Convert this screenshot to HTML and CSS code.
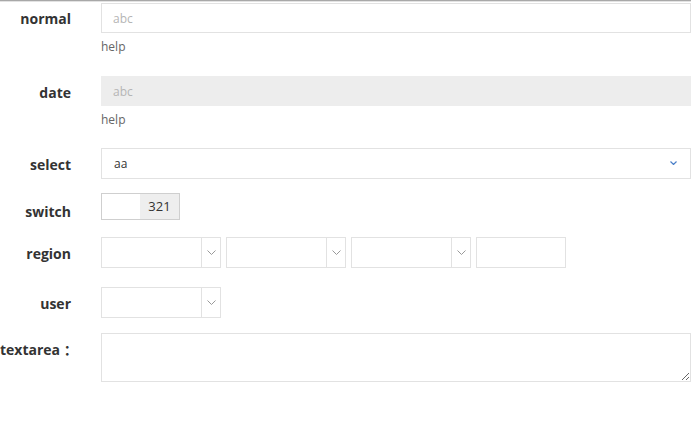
FILE: index.html
```html
<!DOCTYPE html>
<html>
<head>
<meta charset="utf-8">
<link rel="stylesheet" href="styles.css">
</head>
<body>
<div class="topline"></div>
<form class="form">
  <div class="row r1">
    <div class="label">normal</div>
    <div class="control">
      <input class="input" type="text" placeholder="abc">
      <div class="help">help</div>
    </div>
  </div>
  <div class="row r2">
    <div class="label">date</div>
    <div class="control">
      <input class="input disabled" type="text" placeholder="abc" disabled>
      <div class="help">help</div>
    </div>
  </div>
  <div class="row r3">
    <div class="label">select</div>
    <div class="control">
      <div class="select">
        <span class="select-text">aa</span>
        <svg class="select-arrow" width="7" height="4" viewBox="0 0 7 4"><polyline points="0.5,0.5 3.5,3.5 6.5,0.5" fill="none" stroke="#4a7fc8" stroke-width="1.2"/></svg>
      </div>
    </div>
  </div>
  <div class="row r4">
    <div class="label">switch</div>
    <div class="control">
      <div class="switch"><span class="switch-off"></span><span class="switch-val">321</span></div>
    </div>
  </div>
  <div class="row r5">
    <div class="label">region</div>
    <div class="control inline">
      <div class="dd"><span class="dd-body"></span><span class="dd-btn"><svg width="9" height="5" viewBox="0 0 9 5"><polyline points="0.5,0.5 4.5,4.5 8.5,0.5" fill="none" stroke="#999" stroke-width="1"/></svg></span></div>
      <div class="dd"><span class="dd-body"></span><span class="dd-btn"><svg width="9" height="5" viewBox="0 0 9 5"><polyline points="0.5,0.5 4.5,4.5 8.5,0.5" fill="none" stroke="#999" stroke-width="1"/></svg></span></div>
      <div class="dd"><span class="dd-body"></span><span class="dd-btn"><svg width="9" height="5" viewBox="0 0 9 5"><polyline points="0.5,0.5 4.5,4.5 8.5,0.5" fill="none" stroke="#999" stroke-width="1"/></svg></span></div>
      <input class="small-input" type="text">
    </div>
  </div>
  <div class="row r6">
    <div class="label">user</div>
    <div class="control inline">
      <div class="dd"><span class="dd-body"></span><span class="dd-btn"><svg width="9" height="5" viewBox="0 0 9 5"><polyline points="0.5,0.5 4.5,4.5 8.5,0.5" fill="none" stroke="#999" stroke-width="1"/></svg></span></div>
    </div>
  </div>
  <div class="row r7">
    <div class="label label-start">textarea ：</div>
    <div class="control">
      <textarea class="textarea"></textarea>
    </div>
  </div>
</form>
</body>
</html>
```

FILE: styles.css
```css
html, body {
  margin: 0;
  padding: 0;
  background: #fff;
}
body {
  font-family: "Open Sans", "Noto Sans CJK SC", sans-serif;
  color: #333;
  overflow: hidden;
}
.topline {
  height: 1px;
  background: #a8a8a8;
  border-bottom: 1px solid #e2e2e2;
}
.form {
  padding-top: 1px;
}
.row {
  display: flex;
  align-items: flex-start;
  min-height: 34px;
}
.r1 { margin-bottom: 20px; }
.r2 { margin-bottom: 19px; }
.r3 { margin-bottom: 11px; }
.r4 { margin-bottom: 10px; }
.r5 { margin-bottom: 16px; }
.r6 { margin-bottom: 12px; }
.label {
  flex: 0 0 71px;
  width: 71px;
  margin-right: 30px;
  display: flex;
  justify-content: flex-end;
  white-space: nowrap;
  font-size: 14px;
  font-weight: 700;
  line-height: 20px;
  padding-top: 7px;
  color: #333;
}
.label.label-start {
  justify-content: flex-start;
}
.r1 .label { padding-top: 6px; }
.r4 .label { padding-top: 9px; }
.control {
  flex: 1;
  min-width: 0;
}
.control.inline {
  display: flex;
  gap: 5px;
}
.input {
  display: block;
  box-sizing: border-box;
  width: 590px;
  height: 30px;
  margin: 0;
  border: 1px solid #e2e2e2;
  padding: 0 11px;
  font-family: "Open Sans", sans-serif;
  font-size: 12px;
  color: #333;
  background: #fff;
  outline: none;
}
.input::placeholder {
  color: #b5b5b5;
}
.input.disabled {
  background: #ededed;
  border-color: #ededed;
}
.help {
  margin-top: 5px;
  font-size: 12px;
  line-height: 18px;
  color: #666;
}
.select {
  box-sizing: border-box;
  width: 590px;
  height: 31px;
  border: 1px solid #e2e2e2;
  display: flex;
  align-items: center;
  justify-content: space-between;
  padding: 0 13px 0 12px;
}
.select-text {
  font-size: 12px;
  color: #333;
}
.select-arrow {
  display: block;
  margin-top: -2px;
}
.switch {
  box-sizing: border-box;
  width: 79px;
  height: 27px;
  border: 1px solid #cfcfcf;
  display: flex;
}
.switch-off {
  width: 38px;
  background: #fff;
}
.switch-val {
  flex: 1;
  background: #eee;
  font-size: 13px;
  line-height: 25px;
  text-align: center;
  color: #333;
}
.dd {
  box-sizing: border-box;
  width: 120px;
  height: 31px;
  border: 1px solid #e2e2e2;
  display: flex;
}
.dd-body {
  flex: 1;
}
.dd-btn {
  width: 18px;
  border-left: 1px solid #e2e2e2;
  display: flex;
  align-items: center;
  justify-content: center;
}
.dd-btn svg {
  display: block;
  margin-top: -1px;
}
.small-input {
  box-sizing: border-box;
  width: 90px;
  height: 31px;
  margin: 0;
  border: 1px solid #e2e2e2;
  padding: 0 6px;
  outline: none;
}
.textarea {
  display: block;
  box-sizing: border-box;
  width: 590px;
  height: 49px;
  margin: 0;
  border: 1px solid #e2e2e2;
  padding: 4px 8px;
  font-family: "Open Sans", sans-serif;
  font-size: 12px;
  outline: none;
}
```
